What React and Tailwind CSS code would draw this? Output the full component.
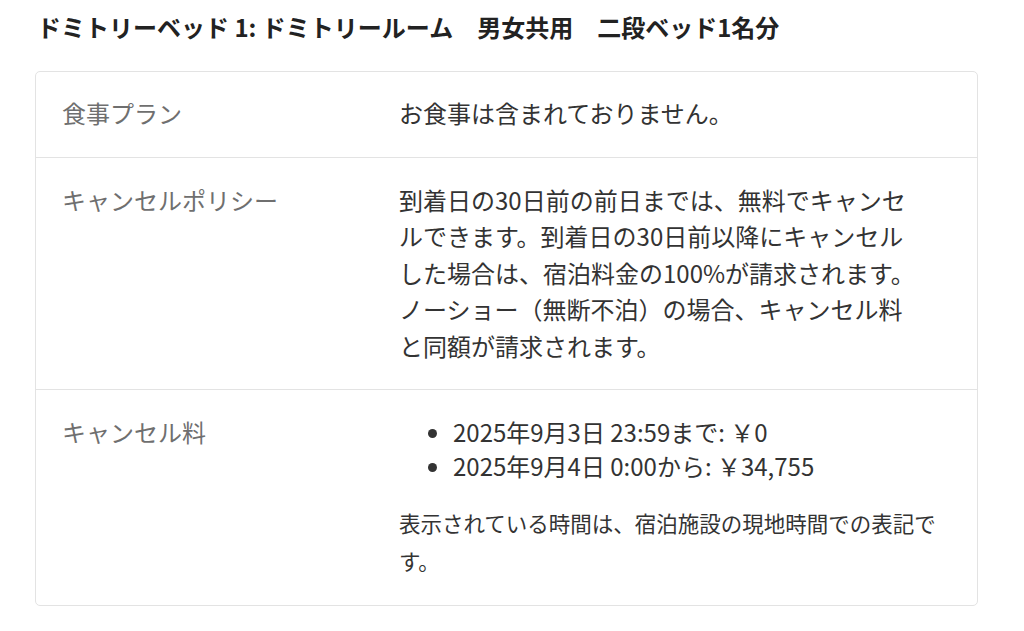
export default function App() {
  const font = { fontFamily: "'Noto Sans CJK JP', 'Noto Sans', sans-serif" };

  return (
    <div className="min-h-screen bg-white px-[35px] pt-[10px] pb-6" style={font}>
      {/* Room title */}
      <h2 className="text-[24px] leading-[34px] font-bold text-[#222] pl-[2px]">
        ドミトリーベッド 1: ドミトリールーム　男女共用　二段ベッド1名分
      </h2>

      {/* Policy table */}
      <div className="mt-[27px] w-[943px] rounded-[5px] border border-[#e3e3e3] bg-white">
        <div className="grid grid-cols-[337px_1fr] px-[26px] pt-[23px] pb-[25px] border-b border-[#e3e3e3]">
          <div className="text-[24px] leading-[36.5px] text-[#6f6f6f]">食事プラン</div>
          <div className="text-[24px] leading-[36.5px] text-[#333]">お食事は含まれておりません。</div>
        </div>

        <div className="grid grid-cols-[337px_1fr] px-[26px] pt-[24px] pb-[25px] border-b border-[#e3e3e3]">
          <div className="text-[24px] leading-[36.5px] text-[#6f6f6f]">キャンセルポリシー</div>
          <div className="text-[24px] leading-[36.5px] text-[#333]">
            到着日の30日前の前日までは、無料でキャンセ<br />
            ルできます。到着日の30日前以降にキャンセル<br />
            した場合は、宿泊料金の100%が請求されます。<br />
            ノーショー（無断不泊）の場合、キャンセル料<br />
            と同額が請求されます。
          </div>
        </div>

        <div className="grid grid-cols-[337px_1fr] px-[26px] pt-[24px] pb-[25px]">
          <div className="text-[24px] leading-[36.5px] text-[#6f6f6f]">キャンセル料</div>
          <div className="text-[#333]">
            <ul className="list-disc pl-[54px] mt-[1px] text-[24px] leading-[34px]">
              <li>2025年9月3日 23:59まで: ￥0</li>
              <li>2025年9月4日 0:00から: ￥34,755</li>
            </ul>
            <p className="mt-[21px] text-[21.5px] leading-[38px]">
              表示されている時間は、宿泊施設の現地時間での表記で<br />
              す。
            </p>
          </div>
        </div>
      </div>
    </div>
  );
}
